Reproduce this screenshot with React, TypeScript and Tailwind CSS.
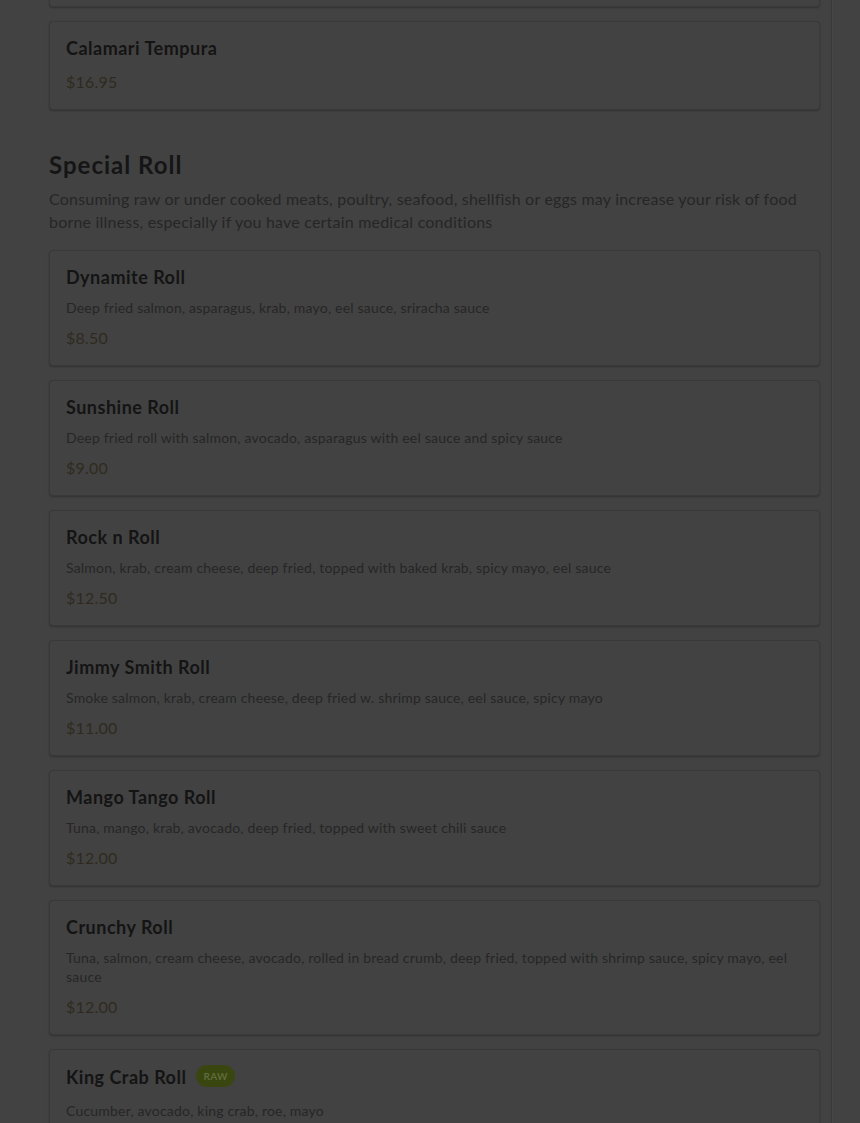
import React from "react";

type Item = { name: string; desc?: string; price: string; raw?: boolean };

const items: Item[] = [
  { name: "Dynamite Roll", desc: "Deep fried salmon, asparagus, krab, mayo, eel sauce, sriracha sauce", price: "$8.50" },
  { name: "Sunshine Roll", desc: "Deep fried roll with salmon, avocado, asparagus with eel sauce and spicy sauce", price: "$9.00" },
  { name: "Rock n Roll", desc: "Salmon, krab, cream cheese, deep fried, topped with baked krab, spicy mayo, eel sauce", price: "$12.50" },
  { name: "Jimmy Smith Roll", desc: "Smoke salmon, krab, cream cheese, deep fried w. shrimp sauce, eel sauce, spicy mayo", price: "$11.00" },
  { name: "Mango Tango Roll", desc: "Tuna, mango, krab, avocado, deep fried, topped with sweet chili sauce", price: "$12.00" },
  { name: "Crunchy Roll", desc: "Tuna, salmon, cream cheese, avocado, rolled in bread crumb, deep fried, topped with shrimp sauce, spicy mayo, eel sauce", price: "$12.00" },
  { name: "King Crab Roll", desc: "Cucumber, avocado, king crab, roe, mayo", price: "$14.00", raw: true },
];

const cardCls =
  "rounded-[4px] border border-[#393939] bg-[#424242] px-4 py-[15px] shadow-[0_1px_2px_rgba(0,0,0,0.25)]";

function Card({ item }: { item: Item }) {
  return (
    <div className={cardCls}>
      <div className="flex items-center gap-2">
        <div className="pt-px text-[18px] font-bold leading-5 tracking-[0.5px] text-[#141414]">{item.name}</div>
        {item.raw && (
          <span className="ml-[2px] inline-flex h-[22px] items-center rounded-full bg-[#3a460f] px-[7px] text-[10px] font-bold leading-none tracking-[0.3px] text-[#5f6b3a]">
            RAW
          </span>
        )}
      </div>
      {item.desc && (
        <div className={`${item.raw ? "mt-[14px]" : "mt-[11px]"} text-[14px] leading-[19px] tracking-[0.2px] text-[#262626]`}>
          {item.desc}
        </div>
      )}
      <div className={`${item.desc ? "mt-[9px]" : "mt-3"} text-[16px] leading-6 tracking-[0.2px] text-[#302a1e]`}>
        {item.price}
      </div>
    </div>
  );
}

export default function App() {
  return (
    <div
      className="flex h-[1123px] w-full overflow-hidden bg-[#424242]"
      style={{ fontFamily: "Lato, 'Noto Sans', sans-serif" }}
    >
      <div className="w-[832px] shrink-0 border-r border-[#383838] pl-[49px] pr-[11px] shadow-[1px_0_0_#474747]">
        <div className="-mt-[81px] flex flex-col gap-[14px]">
          <div className={`${cardCls} h-[88px]`} />
          <Card item={{ name: "Calamari Tempura", price: "$16.95" }} />
        </div>
        <div className="mt-[39px] text-[24px] font-bold leading-8 tracking-[1px] text-[#151515]">Special Roll</div>
        <div className="mt-[6px] text-[16px] leading-[23px] tracking-[0.2px] text-[#262626]">
          Consuming raw or under cooked meats, poultry, seafood, shellfish or eggs may increase your risk of food borne illness, especially if you have certain medical conditions
        </div>
        <div className="mt-[17px] flex flex-col gap-[14px]">
          {items.map((it) => (
            <Card key={it.name} item={it} />
          ))}
        </div>
      </div>
      <div className="flex-1" />
    </div>
  );
}
